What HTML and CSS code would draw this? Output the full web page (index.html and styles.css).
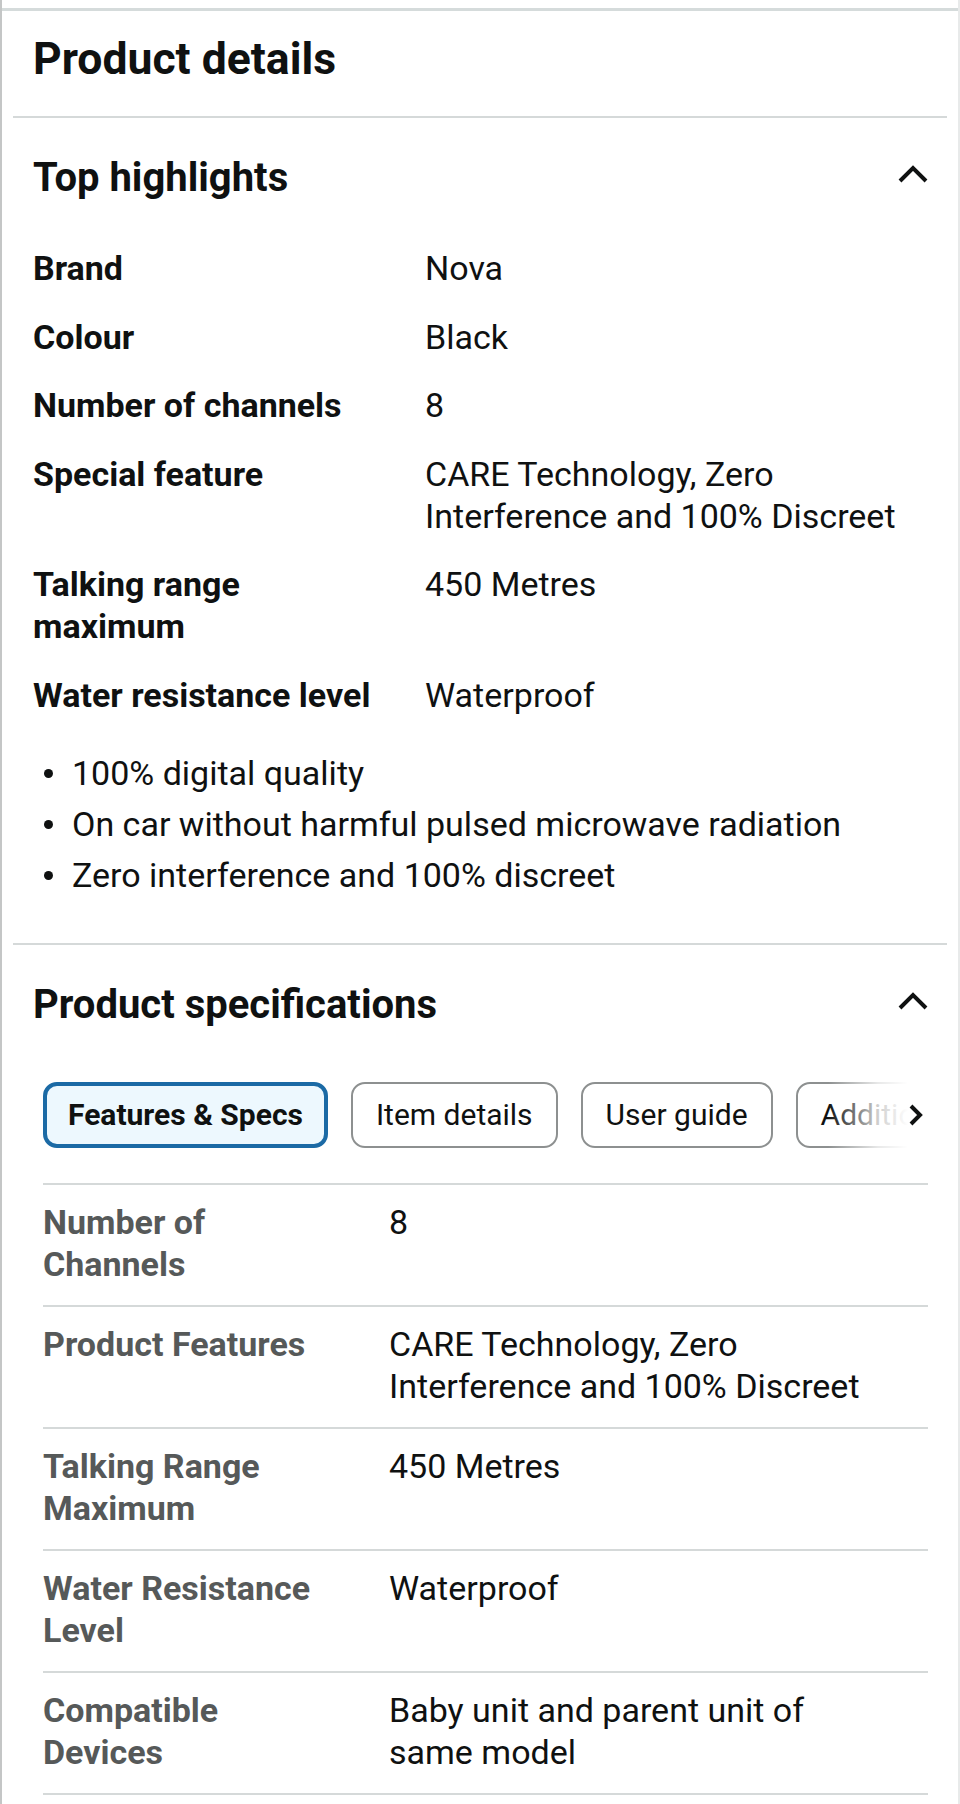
FILE: index.html
```html
<!DOCTYPE html>
<html lang="en">
<head>
  <meta charset="UTF-8">
  <title>Product details</title>
  <link rel="stylesheet" href="styles.css">
</head>
<body>
<div class="page">
  <div class="title">
    <h1>Product details</h1>
  </div>

  <section class="block highlights">
    <div class="block-head">
      <h2>Top highlights</h2>
      <svg class="chevron" width="30" height="18" viewBox="0 0 30 18"><polyline points="2,16 15,3 28,16" /></svg>
    </div>
    <dl class="facts">
      <dt>Brand</dt><dd>Nova</dd>
      <dt>Colour</dt><dd>Black</dd>
      <dt>Number of channels</dt><dd>8</dd>
      <dt>Special feature</dt><dd>CARE Technology, Zero Interference and 100% Discreet</dd>
      <dt>Talking range maximum</dt><dd>450 Metres</dd>
      <dt>Water resistance level</dt><dd>Waterproof</dd>
    </dl>
    <ul class="bullets">
      <li>100% digital quality</li>
      <li>On car without harmful pulsed microwave radiation</li>
      <li>Zero interference and 100% discreet</li>
    </ul>
  </section>

  <section class="block specs">
    <div class="block-head">
      <h2>Product specifications</h2>
      <svg class="chevron" width="30" height="18" viewBox="0 0 30 18"><polyline points="2,16 15,3 28,16" /></svg>
    </div>
    <div class="spec-body">
      <div class="tabs">
        <button class="tab active">Features &amp; Specs</button>
        <button class="tab">Item details</button>
        <button class="tab">User guide</button>
        <button class="tab">Additional details</button>
        <span class="tabs-more">
          <svg width="16" height="24" viewBox="0 0 16 24"><polyline points="3,3 12,12 3,21" /></svg>
        </span>
      </div>
      <table class="spec-table">
        <tr><th>Number of Channels</th><td>8</td></tr>
        <tr><th>Product Features</th><td>CARE Technology, Zero Interference and 100% Discreet</td></tr>
        <tr><th>Talking Range Maximum</th><td>450 Metres</td></tr>
        <tr><th>Water Resistance Level</th><td>Waterproof</td></tr>
        <tr><th>Compatible Devices</th><td>Baby unit and parent unit of same model</td></tr>
      </table>
    </div>
  </section>
</div>
</body>
</html>
```

FILE: styles.css
```css
body {
  margin: 0;
  background: #fff;
  color: #0f1111;
  font-family: Roboto, "Liberation Sans", sans-serif;
}
.page {
  min-height: 100vh;
  box-sizing: border-box;
  padding-top: 8px;
  border-left: 2px solid #c4c6c6;
  border-right: 2px solid #e8eaea;
}
.title {
  border-top: 3px solid #d5dbdb;
}
.title h1 {
  margin: 0;
  padding: 22px 31px 31px;
  font-size: 44.5px;
  line-height: 52px;
  font-weight: 700;
}
.block {
  margin: 0 11px;
  border-top: 2px solid #d5d9d9;
  padding: 37px 19px 47px 20px;
}
.block-head {
  display: flex;
  justify-content: space-between;
  align-items: flex-start;
}
.block-head h2 {
  margin: 0;
  font-size: 40px;
  line-height: 46px;
  font-weight: 700;
}
.chevron {
  margin-top: 10px;
}
.chevron polyline {
  fill: none;
  stroke: #0f1111;
  stroke-width: 4;
}

/* top highlights */
.facts {
  display: grid;
  grid-template-columns: 352px 1fr;
  column-gap: 40px;
  row-gap: 26.5px;
  margin: 46px 0 0;
  font-size: 34px;
  line-height: 42px;
}
.facts dt {
  font-weight: 700;
}
.facts dd {
  margin: 0;
}
.bullets {
  list-style: none;
  margin: 36px 0 0;
  padding: 0;
  font-size: 34px;
  line-height: 42px;
}
.bullets li {
  position: relative;
  padding-left: 39px;
  margin-bottom: 9px;
}
.bullets li:last-child {
  margin-bottom: 0;
}
.bullets li::before {
  content: "";
  position: absolute;
  left: 11px;
  top: 17px;
  width: 9px;
  height: 9px;
  border-radius: 50%;
  background: #0f1111;
}

/* specifications */
.specs {
  padding-bottom: 0;
}
.spec-body {
  margin-left: 10px;
}
.tabs {
  position: relative;
  display: flex;
  gap: 23px;
  margin-top: 54px;
  overflow: hidden;
}
.tab {
  flex-shrink: 0;
  height: 66px;
  padding: 0 23px;
  border: 2px solid #8d9090;
  border-radius: 14px;
  background: #fff;
  color: #0f1111;
  font-family: Roboto, "Liberation Sans", sans-serif;
  font-size: 30px;
}
.tab.active {
  border: 4px solid #1b6aa5;
  background: #edf8fe;
  font-weight: 700;
  padding: 0 21px;
}
.tabs-more {
  position: absolute;
  right: 0;
  top: 0;
  width: 100px;
  height: 66px;
  display: flex;
  align-items: center;
  justify-content: flex-end;
  padding-right: 4px;
  box-sizing: border-box;
  background: linear-gradient(to right, rgba(255,255,255,0), rgba(255,255,255,0.8) 50%, #fff 80%);
}
.tabs-more polyline {
  fill: none;
  stroke: #0f1111;
  stroke-width: 4;
}
.spec-table {
  width: 100%;
  margin-top: 35px;
  border-collapse: collapse;
  font-size: 34px;
  line-height: 42px;
}
.spec-table th,
.spec-table td {
  border-top: 2px solid #d5d9d9;
  border-bottom: 2px solid #d5d9d9;
  padding: 16px 0 20px;
  text-align: left;
  vertical-align: top;
}
.spec-table th {
  width: 290px;
  padding-right: 56px;
  color: #565959;
  font-weight: 700;
}
.spec-table td {
  padding-right: 50px;
}
```
